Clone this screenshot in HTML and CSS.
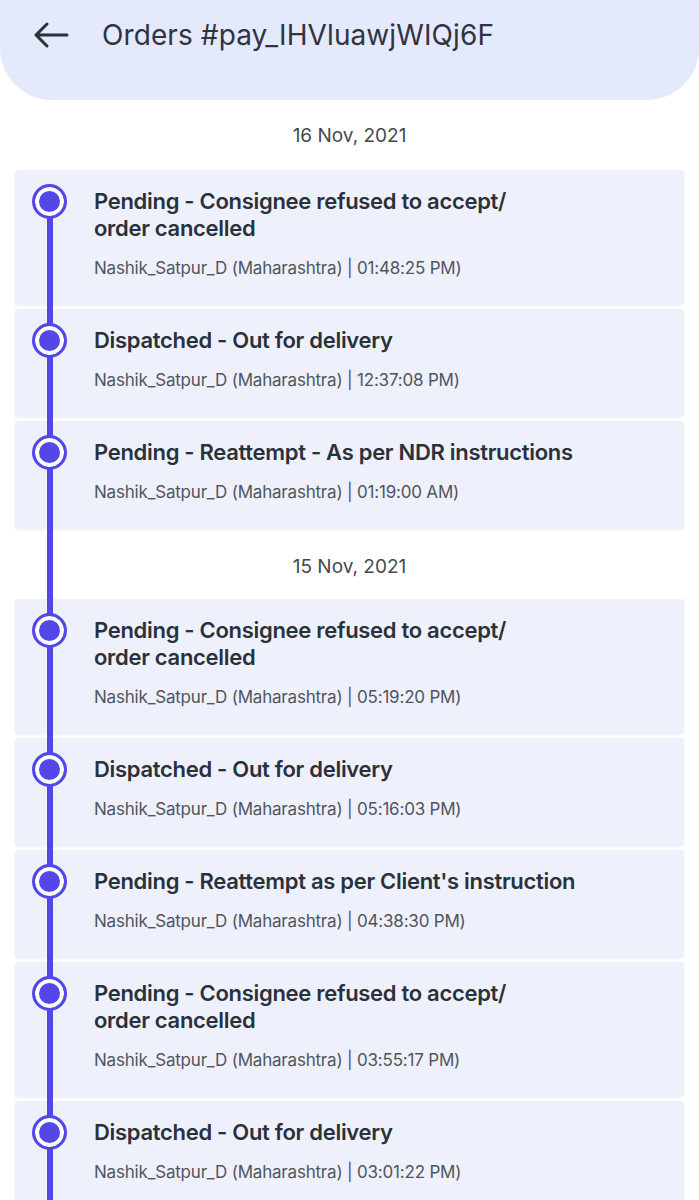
FILE: index.html
```html
<!DOCTYPE html>
<html>
<head>
<meta charset="utf-8">
<link rel="stylesheet" href="styles.css">
</head>
<body>
<header class="appbar">
  <svg class="back" width="36" height="28" viewBox="0 0 36 28" aria-hidden="true">
    <path d="M34 14H3M14 3L3 14l11 11" fill="none" stroke="#2c3038" stroke-width="3" stroke-linecap="round" stroke-linejoin="round"/>
  </svg>
  <h1 class="title">Orders #pay_IHVluawjWIQj6F</h1>
</header>

<main class="timeline">
  <div class="date">16 Nov, 2021</div>
  <div class="card"><span class="dot"></span>
    <div class="status">Pending - Consignee refused to accept/<br>order cancelled</div>
    <div class="meta">Nashik_Satpur_D (Maharashtra) | 01:48:25 PM)</div>
  </div>
  <div class="card"><span class="dot"></span>
    <div class="status">Dispatched - Out for delivery</div>
    <div class="meta">Nashik_Satpur_D (Maharashtra) | 12:37:08 PM)</div>
  </div>
  <div class="card"><span class="dot"></span>
    <div class="status">Pending - Reattempt - As per NDR instructions</div>
    <div class="meta">Nashik_Satpur_D (Maharashtra) | 01:19:00 AM)</div>
  </div>

  <div class="date">15 Nov, 2021</div>
  <div class="card"><span class="dot"></span>
    <div class="status">Pending - Consignee refused to accept/<br>order cancelled</div>
    <div class="meta">Nashik_Satpur_D (Maharashtra) | 05:19:20 PM)</div>
  </div>
  <div class="card"><span class="dot"></span>
    <div class="status">Dispatched - Out for delivery</div>
    <div class="meta">Nashik_Satpur_D (Maharashtra) | 05:16:03 PM)</div>
  </div>
  <div class="card"><span class="dot"></span>
    <div class="status">Pending - Reattempt as per Client's instruction</div>
    <div class="meta">Nashik_Satpur_D (Maharashtra) | 04:38:30 PM)</div>
  </div>
  <div class="card"><span class="dot"></span>
    <div class="status">Pending - Consignee refused to accept/<br>order cancelled</div>
    <div class="meta">Nashik_Satpur_D (Maharashtra) | 03:55:17 PM)</div>
  </div>
  <div class="card"><span class="dot"></span>
    <div class="status">Dispatched - Out for delivery</div>
    <div class="meta">Nashik_Satpur_D (Maharashtra) | 03:01:22 PM)</div>
  </div>
</main>
</body>
</html>
```

FILE: styles.css
```css
* { box-sizing: border-box; }
html, body {
  margin: 0;
  padding: 0;
  background: #ffffff;
  font-family: Inter, "Noto Sans", "Liberation Sans", sans-serif;
}
.appbar {
  height: 100px;
  background: #e4e9fc;
  border-radius: 0 0 52px 52px;
  display: flex;
  align-items: flex-start;
  padding: 21px 0 0 33px;
  gap: 33px;
}
.back {
  display: block;
  flex: none;
}
.title {
  margin: 0;
  font-size: 28px;
  line-height: 28px;
  font-weight: 400;
  color: #2f3440;
  letter-spacing: 0.1px;
}
.timeline {
  position: relative;
}
.timeline::before {
  content: "";
  position: absolute;
  left: 47px;
  width: 6px;
  top: 103px;
  bottom: 0;
  background: #5447e8;
  z-index: 1;
}
.date {
  height: 70px;
  display: flex;
  align-items: center;
  justify-content: center;
  font-size: 19px;
  color: #45484e;
}
.card + .date { height: 66px; }
.card {
  position: relative;
  margin: 0 15px 4px;
  padding: 18px 16px 26px 79px;
  background: #eef1fc;
  border-radius: 4px;
  box-shadow: 0 1px 3px rgba(40, 50, 90, 0.08);
}
.dot {
  position: absolute;
  left: 17px;
  top: 14px;
  width: 35px;
  height: 35px;
  border-radius: 50%;
  background: #5447e8;
  border: 3px solid #5447e8;
  box-shadow: inset 0 0 0 4px #ffffff;
  z-index: 2;
}
.status {
  font-size: 22px;
  line-height: 27px;
  font-weight: 600;
  color: #2b313b;
  letter-spacing: -0.3px;
}
.meta {
  margin-top: 15px;
  font-size: 17px;
  line-height: 22px;
  color: #50555e;
  letter-spacing: -0.2px;
}
```
